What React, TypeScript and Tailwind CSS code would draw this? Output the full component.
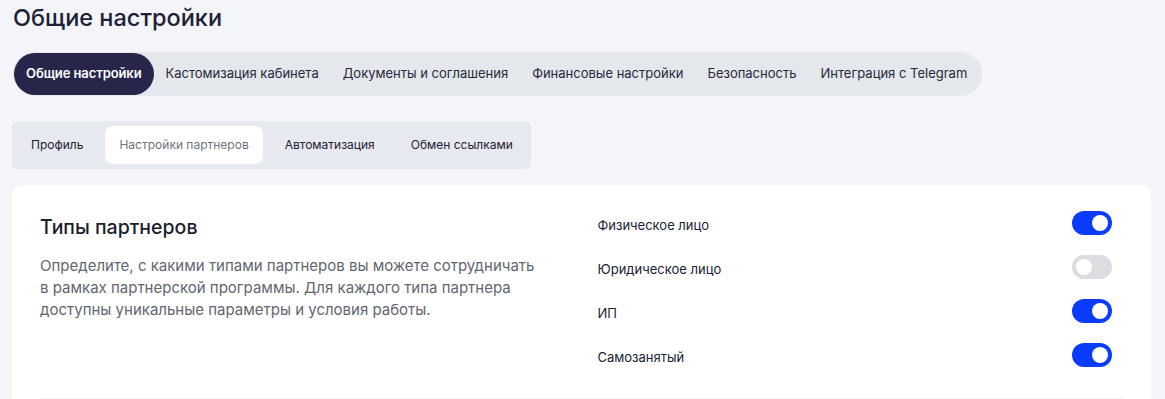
import React, { useState } from 'react';

const MAIN_TABS = [
    'Общие настройки',
    'Кастомизация кабинета',
    'Документы и соглашения',
    'Финансовые настройки',
    'Безопасность',
    'Интеграция с Telegram',
];

const SUB_TABS = ['Профиль', 'Настройки партнеров', 'Автоматизация', 'Обмен ссылками'];

const PARTNER_TYPES = [
    { id: 'individual', label: 'Физическое лицо', enabled: true },
    { id: 'legal', label: 'Юридическое лицо', enabled: false },
    { id: 'ip', label: 'ИП', enabled: true },
    { id: 'selfemployed', label: 'Самозанятый', enabled: true },
];

const Toggle = ({ checked, onChange }: { checked: boolean; onChange: () => void }) => (
    <button
        type="button"
        onClick={onChange}
        className={`relative h-6 w-10 shrink-0 rounded-full transition-colors ${checked ? 'bg-[#0a3cff]' : 'bg-[#dcdde1]'}`}
    >
        <span
            className={`absolute top-1 h-4 w-4 rounded-full bg-white transition-all ${checked ? 'left-[20px]' : 'left-1'}`}
        />
    </button>
);

export default function App() {
    const [mainTab, setMainTab] = useState(0);
    const [subTab, setSubTab] = useState(1);
    const [types, setTypes] = useState(PARTNER_TYPES);

    const toggle = (id: string) =>
        setTypes(prev => prev.map(t => (t.id === id ? { ...t, enabled: !t.enabled } : t)));

    return (
        <div className="min-h-screen bg-[#f4f5f9] px-[12px] pt-[3px] font-['Inter',sans-serif] text-[#1f2133]">
            <h1 className="pl-px text-[23.5px] leading-[30px] font-medium text-[#202036]">Общие настройки</h1>

            {/* Main tabs */}
            <div className="mt-[19px] ml-px inline-flex items-center rounded-full bg-[#e4e7ec] p-[1px] pr-[3px]">
                {MAIN_TABS.map((tab, i) => (
                    <button
                        key={tab}
                        onClick={() => setMainTab(i)}
                        className={`h-[42px] rounded-full text-[13px] whitespace-nowrap ${
                            mainTab === i
                                ? 'bg-[#27264a] px-[12px] font-semibold tracking-[-0.1px] text-white'
                                : 'px-3 text-[#26283a]'
                        }`}
                    >
                        {tab}
                    </button>
                ))}
            </div>

            {/* Sub tabs */}
            <div className="mt-[25px] inline-flex items-center gap-2 rounded-md bg-[#e7e9f0] p-[5px] pr-1">
                {SUB_TABS.map((tab, i) => (
                    <button
                        key={tab}
                        onClick={() => setSubTab(i)}
                        className={`h-[38px] rounded-lg px-[14px] text-[12px] whitespace-nowrap ${
                            subTab === i ? 'bg-white text-[#6f7380]' : 'text-[#1f2133]'
                        }`}
                    >
                        {tab}
                    </button>
                ))}
            </div>

            {/* Partner types card */}
            <div className="mt-[16px] mr-[2px] rounded-[10px] bg-white px-7 pt-[26px] pb-6">
                <div className="grid grid-cols-2 gap-8">
                    <div className="pt-[4px]">
                        <h2 className="text-[19.5px] leading-6 font-medium text-[#1c1d2e]">Типы партнеров</h2>
                        <p className="mt-4 text-[15px] leading-[22px] text-[#62666f]">
                            Определите, с какими типами партнеров вы можете сотрудничать
                            <br />в рамках партнерской программы. Для каждого типа партнера доступны уникальные
                            параметры и условия работы.
                        </p>
                    </div>
                    <div className="flex flex-col gap-5 pr-[11px]">
                        {types.map(t => (
                            <div key={t.id} className="flex h-6 items-center justify-between">
                                <span className="pt-[5px] text-[13px] text-[#202234]">{t.label}</span>
                                <Toggle checked={t.enabled} onChange={() => toggle(t.id)} />
                            </div>
                        ))}
                    </div>
                </div>
                <div className="mt-[31px] h-px bg-[#eef0f4]" />
            </div>
        </div>
    );
}
